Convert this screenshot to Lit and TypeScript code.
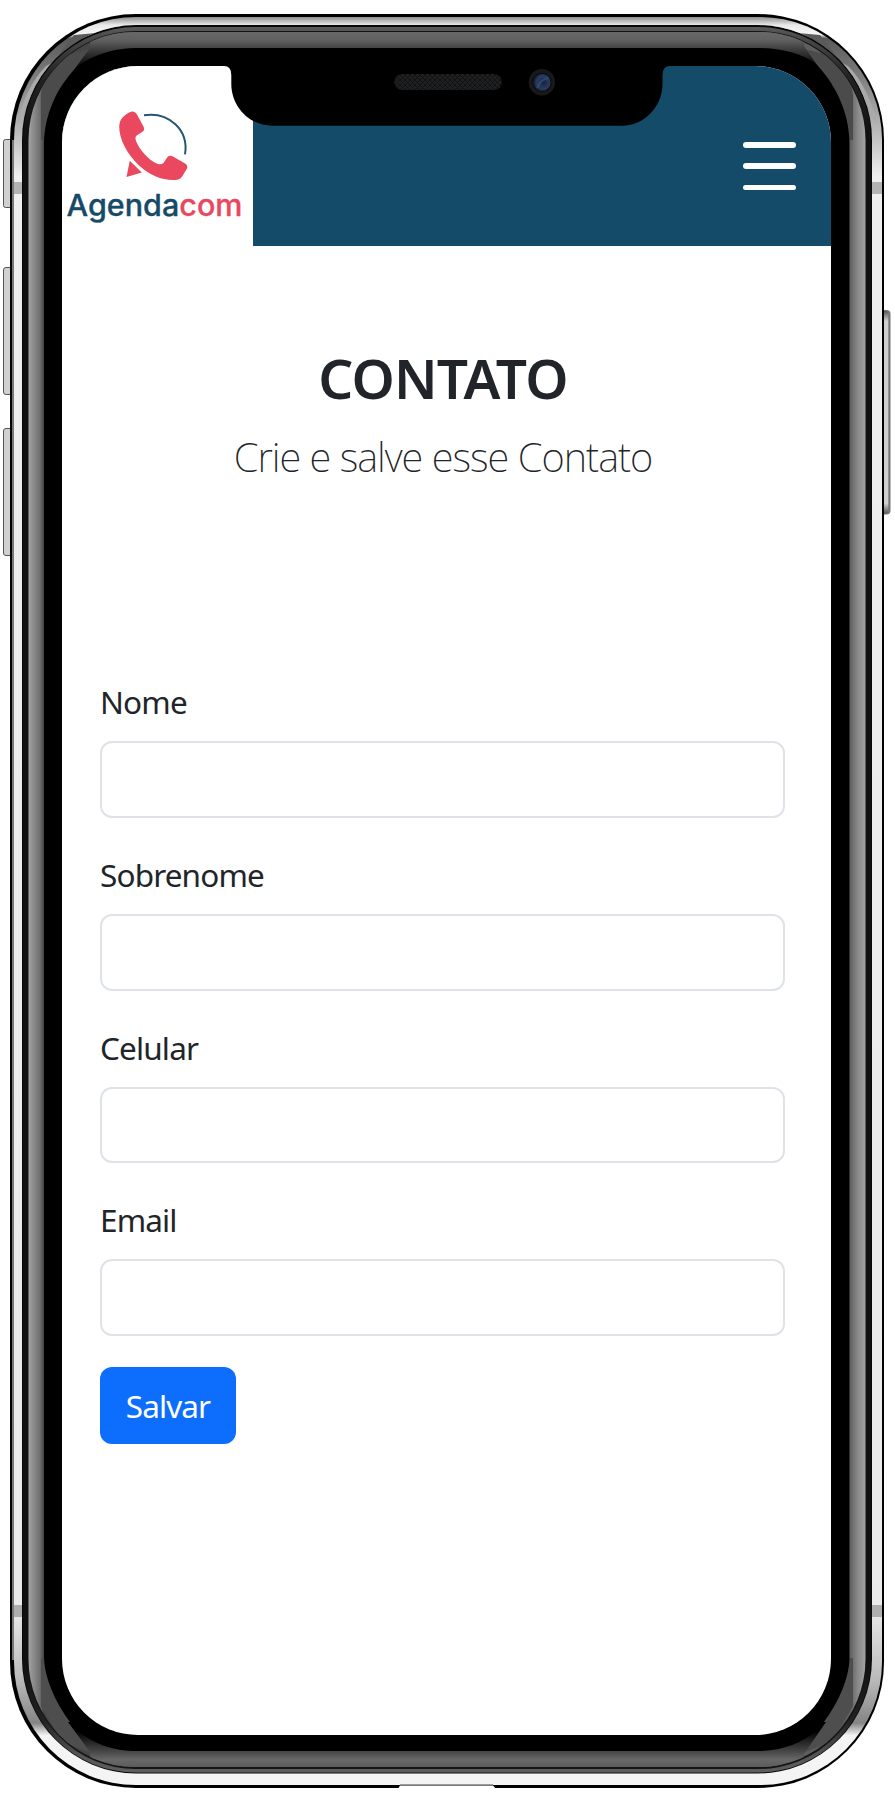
import { LitElement, html, css, svg } from "lit";
import { customElement, property } from "lit/decorators.js";

const rr = (x1: number, y1: number, x2: number, y2: number, rx: number, ry: number, fill: string) =>
  svg`<rect x=${x1} y=${y1} width=${x2 - x1} height=${y2 - y1} rx=${rx} ry=${ry} fill=${fill}></rect>`;

@customElement("phone-frame")
export class PhoneFrame extends LitElement {
  static styles = css`
    :host { display: block; }
    svg { display: block; }
  `;

  private corner() {
    return svg`
      <g clip-path="url(#bezel)">
        <path d="M41 140 V96 L44 76 L62 56 L90 49 L100 60 L48 140 Z" fill="#4b4b4b"></path>
      </g>
      <g clip-path="url(#band)">
        <path d="M84 32 Q100 26 135 25.500 L135 34 Q96 35 74 36 Z" fill="#f4f4f4" opacity=".6"></path>
        <path d="M74 35 L102 32.500 Q78 44 58 62 Q48 62 36 84 Z" fill="#5a5a5a"></path>
        <path d="M58 60 Q36 82 24 112 L17 124 Q26 86 46 66 Z" fill="#aaaaaa"></path>
      </g>`;
  }

  private lowerCorner() {
    return svg`
      <g clip-path="url(#bezel)">
        <path d="M41 1658 V1706 L62 1742 L89 1752 L100 1740 L48 1658 Z" fill="#4e4e4e"></path>
      </g>`;
  }

  render() {
    return html`<svg width="895" height="1801" viewBox="0 0 895 1801">
      <defs>
        <linearGradient id="band-v" gradientUnits="userSpaceOnUse" x1="0" y1="17" x2="0" y2="1785">
          <stop offset="0" stop-color="#8d8d8d"></stop><stop offset=".0045" stop-color="#e9e9e9"></stop>
          <stop offset=".01" stop-color="#f4f4f4"></stop><stop offset=".012" stop-color="#5a5a5a"></stop>
          <stop offset=".03" stop-color="#777"></stop><stop offset=".065" stop-color="#bbb"></stop>
          <stop offset=".09" stop-color="#eee"></stop><stop offset=".9" stop-color="#eaeaea"></stop>
          <stop offset=".94" stop-color="#bbb"></stop><stop offset=".965" stop-color="#858585"></stop>
          <stop offset=".972" stop-color="#f4f4f4"></stop><stop offset="1" stop-color="#f4f4f4"></stop>
        </linearGradient>
        <linearGradient id="rim" gradientUnits="userSpaceOnUse" x1="0" y1="26" x2="0" y2="1773">
          <stop offset="0" stop-color="#5e5e5e"></stop><stop offset=".006" stop-color="#4a4a4a"></stop>
          <stop offset=".03" stop-color="#222"></stop><stop offset=".065" stop-color="#101010"></stop>
          <stop offset=".935" stop-color="#101010"></stop><stop offset=".97" stop-color="#222"></stop>
          <stop offset=".99" stop-color="#555"></stop><stop offset="1" stop-color="#5e5e5e"></stop>
        </linearGradient>
        <linearGradient id="sides" gradientUnits="userSpaceOnUse" x1="28" y1="0" x2="866" y2="0">
          <stop offset="0" stop-color="#a4a4a4"></stop><stop offset=".014" stop-color="#707070"></stop>
          <stop offset=".019" stop-color="#444"></stop><stop offset=".981" stop-color="#606060"></stop>
          <stop offset=".99" stop-color="#888"></stop><stop offset="1" stop-color="#a4a4a4"></stop>
        </linearGradient>
        <linearGradient id="topg" gradientUnits="userSpaceOnUse" x1="0" y1="32" x2="0" y2="68">
          <stop offset="0" stop-color="#686868"></stop><stop offset=".22" stop-color="#616161"></stop>
          <stop offset=".45" stop-color="#424242"></stop><stop offset="1" stop-color="#000"></stop>
        </linearGradient>
        <linearGradient id="botg" gradientUnits="userSpaceOnUse" x1="0" y1="1767" x2="0" y2="1731">
          <stop offset="0" stop-color="#5c5c5c"></stop><stop offset=".2" stop-color="#686868"></stop>
          <stop offset=".45" stop-color="#444"></stop><stop offset="1" stop-color="#000"></stop>
        </linearGradient>
        <linearGradient id="key" x1="0" y1="0" x2="0" y2="1">
          <stop offset="0" stop-color="#555"></stop><stop offset=".05" stop-color="#cfd0cf"></stop>
          <stop offset=".95" stop-color="#cfd0cf"></stop><stop offset="1" stop-color="#555"></stop>
        </linearGradient>
        <clipPath id="bezel"><rect x="28.500" y="32" width="837" height="1735" rx="106" ry="108"></rect></clipPath>
        <clipPath id="band"><path clip-rule="evenodd" d="M14 140 A122 123 0 0 1 136 17 H447 V25 H136 A114 115 0 0 0 22 140 Z"></path></clipPath>
      </defs>

      <rect x="3.500" y="139.500" width="10" height="68" rx="2" fill="#cfd0cf" stroke="#555"></rect>
      <rect x="3.500" y="267.500" width="10" height="127" rx="2.500" fill="#cfd0cf" stroke="#555"></rect>
      <rect x="3.500" y="428.500" width="10" height="127" rx="2.500" fill="#cfd0cf" stroke="#555"></rect>
      <rect x="880" y="310" width="10.500" height="204.500" rx="4" fill="#777"></rect>
      <rect x="880" y="311" width="8.300" height="202.500" rx="3" fill="url(#key)"></rect>

      ${rr(10, 14, 884, 1788, 126, 126, "#000")}
      <rect x="12" y="140" width="2" height="1520" fill="#777"></rect>
      ${rr(14, 17, 882, 1785, 122, 123, "url(#band-v)")}
      <rect x="14" y="182" width="8" height="12" fill="#b3b3b3"></rect>
      <rect x="872" y="182" width="10" height="12" fill="#b3b3b3"></rect>
      <rect x="14" y="1605" width="8" height="12" fill="#adadad"></rect>
      <rect x="872" y="1605" width="10" height="12" fill="#adadad"></rect>

      ${rr(22, 25, 872, 1773.5, 114, 115, "#080808")}
      ${rr(23, 27, 871, 1772.5, 113, 113, "url(#rim)")}
      ${rr(28, 31, 866.5, 1769, 108, 109, "#151515")}
      ${rr(28.5, 32, 865.5, 1767, 107, 108, "url(#sides)")}
      ${this.corner()}
      <g transform="translate(894 0) scale(-1 1)">${this.corner()}</g>
      ${this.lowerCorner()}
      <g transform="translate(894 0) scale(-1 1)">${this.lowerCorner()}</g>
      <g clip-path="url(#bezel)">
        <path d="M90 28 H804 V46 L826 78 H68 L90 48 Z" fill="url(#topg)"></path>
        <path d="M90 1770 H804 V1754 L826 1722 H68 L90 1752 Z" fill="url(#botg)"></path>
      </g>
      <path d="M136 48 H758 C790 48 812 59 818 66 C838 88 849 115 849.500 142 V1658 C849 1684 832 1714 818 1729 C802 1744 780 1751 758 1751 H136 C114 1751 92 1744 76 1729 C62 1714 45 1684 44 1658 V142 C45 115 56 88 76 68 L84 62 Q108 48 136 48 Z" fill="#000"></path>
    <path d="M398 1789 L400 1785.500 H493 L496 1789 Z" fill="#fff"></path>
      <rect x="400" y="1784.300" width="93" height="1.200" fill="#777"></rect>
    </svg>`;
  }
}

@customElement("phone-notch")
export class PhoneNotch extends LitElement {
  static styles = css`
    :host { display: block; }
    svg { display: block; }
  `;
  render() {
    return html`<svg width="446" height="61" viewBox="224 65 446 61">
      <defs>
        <pattern id="mesh" width="5" height="5" patternUnits="userSpaceOnUse">
          <rect width="5" height="5" fill="#1f2021"></rect>
          <path d="M0 0 L5 5 M5 0 L0 5" stroke="#111" stroke-width="1"></path>
        </pattern>
        <radialGradient id="lens" cx=".6" cy=".5" r=".55">
          <stop offset="0" stop-color="#16213a"></stop><stop offset=".35" stop-color="#1f3052"></stop>
          <stop offset=".7" stop-color="#2b3c60"></stop><stop offset="1" stop-color="#172239"></stop>
        </radialGradient>
      </defs>
      <path d="M224 65 H670 V66 Q662.500 66 662.500 75 V84 C662.500 106 645 125.700 622 125.700 H272 C249 125.700 231.300 106 231.300 84 V75 Q231.300 66 224 66 Z" fill="#000"></path>
      <rect x="394.300" y="74" width="107.500" height="16" rx="8" fill="url(#mesh)"></rect>
      <circle cx="541.900" cy="82.200" r="13.200" fill="#1a1919"></circle>
      <circle cx="541.900" cy="82.400" r="9.600" fill="#080a10"></circle>
      <circle cx="541.900" cy="82.400" r="8.600" fill="url(#lens)"></circle>
      <path d="M537 88 Q540 80 548 78" stroke="#435a86" stroke-width="2" fill="none" opacity=".5"></path>
    </svg>`;
  }
}

@customElement("agenda-logo")
export class AgendaLogo extends LitElement {
  static styles = css`
    :host { display: block; }
    svg { display: block; }
    .word { font: 500 30px Inter, "Open Sans", sans-serif; fill: #174a68; stroke: #174a68; stroke-width: 0.3px; }
    .com { fill: #e9485f; stroke: #e9485f; }
  `;
  render() {
    return html`<svg width="191" height="180" viewBox="62 66 191 180">
      <path d="M121 119.500 C125 114 130.500 111.500 133 111.500 Q135.500 111.800 137 114.500 L143.700 127 Q145 130 142.500 131.800 L137 135.300 Q134.500 137 136 141 C140 150.500 148 159 155.500 163 Q160.500 165.500 163.500 163 L167.500 157 Q169.500 155 172.500 156.200 L185.500 163.700 Q188 165.500 187 168.500 L182 176.700 Q179.500 180 175 180 C162 180.500 150 175.500 139 165.500 C127 154 119 139 119.200 126 Q119.300 122 121 119.500 Z" fill="#e9485f"></path>
      <path d="M129.800 160.700 L141.800 172.500 L126.500 177 Z" fill="#e9485f"></path>
      <path d="M144 115.200 C169 111.500 189 130 185 154.300" stroke="#285570" stroke-width="2" fill="none"></path>
      <text class="word" x="66.500" y="215.500" textLength="176" lengthAdjust="spacingAndGlyphs">Agenda<tspan class="com">com</tspan></text>
    </svg>`;
  }
}

@customElement("form-field")
export class FormField extends LitElement {
  @property() label = "";
  static styles = css`
    :host { display: block; height: 172.600px; }
    .label { display: block; height: 60px; line-height: 42px; font-size: 31.500px; letter-spacing: -0.85px; color: #212529; }
    .input { display: block; box-sizing: border-box; width: 100%; height: 76.500px; border: 2px solid #dfe3e7; border-radius: 12px; background: #fff; padding: 0 24px; font: inherit; outline: none; }
  `;
  render() {
    return html`<label class="label" for="f">${this.label}</label><input id="f" class="input" />`;
  }
}

@customElement("app-root")
export class AppRoot extends LitElement {
  static styles = css`
    :host { display: block; position: relative; box-sizing: border-box; width: 895px; height: 1801px; overflow: hidden; padding: 66px 64px 66px 62px; background: #fff; font-family: "Noto Sans", "Open Sans", sans-serif; color: #212529; }
    .frame { position: absolute; left: 0; top: 0; }
    .notch { position: absolute; left: 224px; top: 65px; }
    .screen { position: relative; width: 769px; height: 1669px; border-radius: 76px; overflow: hidden; background: #fff; }
    .bar { display: flex; justify-content: space-between; height: 180.300px; background: #134b69; }
    .logo { width: 191px; background: #fff; }
    .menu { display: flex; flex-direction: column; gap: 15.700px; padding: 76px 35px 0 0; }
    .line { width: 53px; height: 5.600px; border-radius: 3px; background: #fff; }
    .intro { display: flex; flex-direction: column; align-items: center; box-sizing: border-box; padding-top: 93.500px; height: 435.200px; width: 762px; }
    .title { margin: 0; font-size: 55px; font-weight: 600; line-height: 76px; letter-spacing: -0.8px; }
    .sub { margin: 0; font-size: 40px; font-weight: 200; line-height: 81px; letter-spacing: -1px; white-space: nowrap; }
    .form { width: 685px; padding-left: 38px; }
    .save { display: block; width: 136px; height: 76.500px; margin-top: -4.500px; border: 0; border-radius: 12px; background: #0d6efd; color: #fff; font: 31.500px "Noto Sans", "Open Sans", sans-serif; letter-spacing: -0.9px; padding: 0; }
  `;
  render() {
    return html`
      <phone-frame class="frame"></phone-frame>
      <main class="screen">
        <header class="bar">
          <agenda-logo class="logo"></agenda-logo>
          <div class="menu"><i class="line"></i><i class="line"></i><i class="line"></i></div>
        </header>
        <section class="intro">
          <h1 class="title">CONTATO</h1>
          <p class="sub">Crie e salve esse Contato</p>
        </section>
        <form class="form">
          ${["Nome", "Sobrenome", "Celular", "Email"].map((l) => html`<form-field .label=${l}></form-field>`)}
          <button class="save" type="button">Salvar</button>
        </form>
      </main>
      <phone-notch class="notch"></phone-notch>`;
  }
}
